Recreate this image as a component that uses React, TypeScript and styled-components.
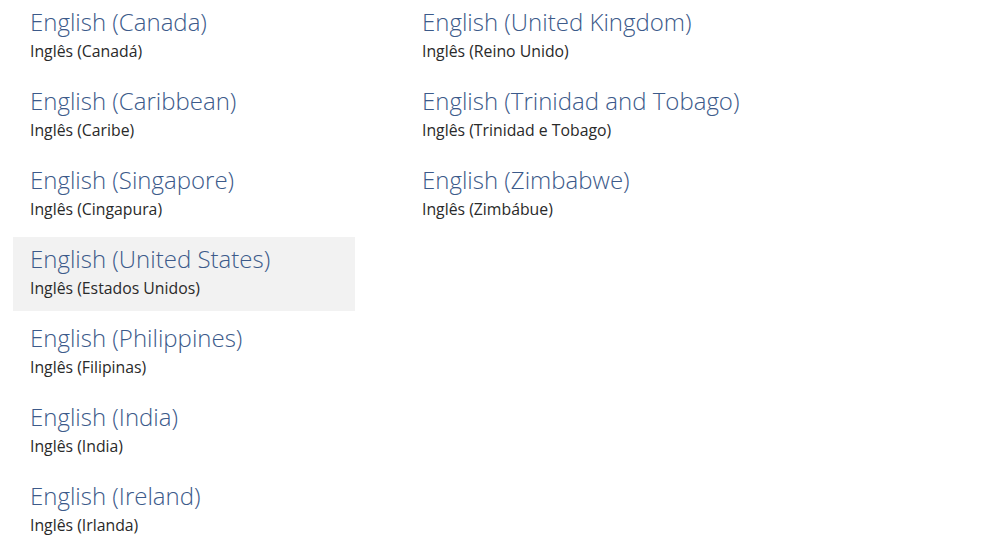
import React from "react";
import styled, { createGlobalStyle } from "styled-components";

type Language = {
  name: string;
  local: string;
  selected?: boolean;
};

const left: Language[] = [
  { name: "English (Canada)", local: "Inglês (Canadá)" },
  { name: "English (Caribbean)", local: "Inglês (Caribe)" },
  { name: "English (Singapore)", local: "Inglês (Cingapura)" },
  { name: "English (United States)", local: "Inglês (Estados Unidos)", selected: true },
  { name: "English (Philippines)", local: "Inglês (Filipinas)" },
  { name: "English (India)", local: "Inglês (India)" },
  { name: "English (Ireland)", local: "Inglês (Irlanda)" },
];

const right: Language[] = [
  { name: "English (United Kingdom)", local: "Inglês (Reino Unido)" },
  { name: "English (Trinidad and Tobago)", local: "Inglês (Trinidad e Tobago)" },
  { name: "English (Zimbabwe)", local: "Inglês (Zimbábue)" },
];

const GlobalStyle = createGlobalStyle`
  html, body {
    margin: 0;
    padding: 0;
    background: #ffffff;
  }
  body {
    font-family: "Open Sans", "Noto Sans", "Liberation Sans", sans-serif;
    -webkit-font-smoothing: antialiased;
  }
`;

const App: React.FC = () => (
  <>
    <GlobalStyle />
    <Page>
      {[left, right].map((col, i) => (
        <Column key={i}>
          {col.map((lang) => (
            <Item key={lang.name} $selected={lang.selected}>
              <Name>{lang.name}</Name>
              <Local>{lang.local}</Local>
            </Item>
          ))}
        </Column>
      ))}
    </Page>
  </>
);

export default App;

/* ----- styles ----- */
const Page = styled.div`
  display: grid;
  grid-template-columns: 342px 342px;
  column-gap: 50px;
  padding-left: 13px;
  width: 984px;
  height: 552px;
  box-sizing: border-box;
  overflow: hidden;
`;

const Column = styled.ul`
  list-style: none;
  margin: 0;
  padding: 0;
  display: flex;
  flex-direction: column;
  gap: 5px;
`;

const Item = styled.li<{ $selected?: boolean }>`
  height: 74px;
  box-sizing: border-box;
  padding: 4px 17px 0;
  background: ${({ $selected }) => ($selected ? "#f2f2f2" : "transparent")};
`;

const Name = styled.div`
  font-size: 24px;
  font-weight: 300;
  line-height: 36px;
  color: #3c5a8a;
  white-space: nowrap;
`;

const Local = styled.div`
  font-size: 15.8px;
  font-weight: 400;
  line-height: 22px;
  color: #2a2a2a;
  white-space: nowrap;
`;
